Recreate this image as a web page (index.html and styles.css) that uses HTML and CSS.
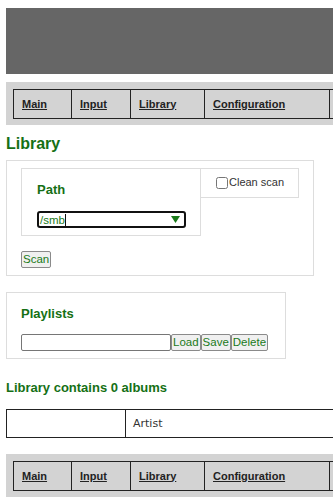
FILE: index.html
```html
<!DOCTYPE html>
<html lang="en">
<head>
    <meta charset="UTF-8">
    <meta name="viewport" content="width=device-width, initial-scale=1.0">
    <title>Library</title>
    <link rel="stylesheet" href="styles.css">
</head>
<body>

    <div class="page">
        <div class="banner"></div>

        <div class="menu">
            <table class="menu-table">
                <tr>
                    <td class="col-main"><a href="#">Main</a></td>
                    <td class="col-input"><a href="#">Input</a></td>
                    <td class="col-library"><a href="#">Library</a></td>
                    <td class="col-config"><a href="#">Configuration</a></td>
                    <td class="col-more"></td>
                </tr>
            </table>
        </div>

        <h2 class="title">Library</h2>

        <div class="panel scan-panel">
            <div class="scan-row">
                <div class="path-box">
                    <div class="label">Path</div>
                    <div class="combo">
                        <span class="combo-text">/smb</span><span class="caret"></span>
                        <svg class="combo-arrow" width="9" height="7" viewBox="0 0 9 7">
                            <polygon points="0,0 9,0 4.5,7" fill="#1a7a1a"/>
                        </svg>
                    </div>
                </div>
                <div class="clean-box">
                    <label class="check"><input type="checkbox" class="check-input">Clean scan</label>
                </div>
            </div>
            <button class="btn scan-btn">Scan</button>
        </div>

        <div class="panel playlist-panel">
            <div class="label">Playlists</div>
            <div class="playlist-row">
                <input type="text" class="playlist-input">
                <button class="btn">Load</button>
                <button class="btn">Save</button>
                <button class="btn">Delete</button>
            </div>
        </div>

        <h3 class="summary">Library contains 0 albums</h3>

        <table class="album-table">
            <tr>
                <td class="album-cover"></td>
                <td class="album-artist">Artist</td>
            </tr>
        </table>

        <div class="menu menu-bottom">
            <table class="menu-table">
                <tr>
                    <td class="col-main"><a href="#">Main</a></td>
                    <td class="col-input"><a href="#">Input</a></td>
                    <td class="col-library"><a href="#">Library</a></td>
                    <td class="col-config"><a href="#">Configuration</a></td>
                    <td class="col-more"></td>
                </tr>
            </table>
        </div>
    </div>

</body>
</html>
```

FILE: styles.css
```css
/* Basic Reset */
* {
    margin: 0;
    padding: 0;
    box-sizing: border-box;
}

html {
    overflow: hidden;
}

body {
    font-family: 'Liberation Sans', Arial, sans-serif;
    background-color: #fff;
    color: #333;
    margin: 8px 0 0 6px;
}

.page {
    width: 420px;
}

.banner {
    height: 66px;
    background-color: #666;
}

/* Navigation bar */
.menu {
    margin-top: 8px;
    padding: 7px 0 6px 7px;
    background-color: #d3d3d3;
}

.menu-bottom {
    margin-top: 16px;
}

.menu-table {
    border-collapse: collapse;
    table-layout: fixed;
    width: 436px;
}

.menu-table td {
    border: 1px solid #222;
    padding: 7px 8px;
    height: 29px;
    font-size: 11px;
    font-weight: bold;
    line-height: 13px;
    text-align: left;
    vertical-align: middle;
}

.menu-table a {
    color: #222;
}

.col-main { width: 58px; }
.col-input { width: 59px; }
.col-library { width: 74px; }
.col-config { width: 125px; }
.col-more { width: 120px; }

/* Headings */
.title {
    margin: 9px 0 7px;
    font-size: 16px;
    line-height: 19px;
    color: #157015;
}

.label {
    font-size: 13px;
    font-weight: bold;
    line-height: 16px;
    color: #157015;
}

.summary {
    margin: 21px 0 13px;
    font-size: 13px;
    line-height: 16px;
    color: #157015;
}

/* Panels */
.panel {
    border: 1px solid #ddd;
}

.scan-panel {
    width: 308px;
    padding: 7px 14px 7px 14px;
}

.scan-row {
    display: flex;
    align-items: flex-start;
}

.path-box {
    width: 180px;
    height: 68px;
    border: 1px solid #ddd;
    padding: 13px 14px 7px 15px;
}

.combo {
    display: flex;
    align-items: center;
    width: 149px;
    height: 17px;
    margin-top: 13px;
    border: 2px solid #111;
    border-radius: 3px;
    padding: 0 4px 0 1px;
    font-size: 11.5px;
    color: #1a7a1a;
}

.caret {
    width: 1px;
    height: 12px;
    background-color: #111;
}

.combo-arrow {
    margin-left: auto;
}

.clean-box {
    width: 98px;
    height: 30px;
    border: 1px solid #ddd;
    border-left: none;
    padding: 7px 0 0 15px;
}

.check {
    display: flex;
    align-items: center;
    font-size: 11px;
    line-height: 13px;
    color: #333;
}

.check-input {
    width: 12px;
    height: 12px;
    margin: 0 1px 0 0;
}

.btn {
    height: 17px;
    padding: 0 1px;
    font-family: 'Liberation Sans', Arial, sans-serif;
    font-size: 11.5px;
    line-height: 15px;
    color: #1a7a1a;
    background-color: #f0f0f0;
    border: 1px solid #8a8a8a;
    border-radius: 2px;
}

.scan-btn {
    display: block;
    margin-top: 15px;
}

.playlist-panel {
    width: 280px;
    margin-top: 16px;
    padding: 13px 14px 7px 14px;
}

.playlist-row {
    display: flex;
    margin-top: 12px;
}

.playlist-input {
    width: 150px;
    height: 17px;
    border: 1px solid #767676;
    border-radius: 2px;
    background-color: #fff;
}

/* Album table */
.album-table {
    border-collapse: collapse;
    table-layout: fixed;
    width: 420px;
}

.album-table td {
    border: 1px solid #222;
    height: 28px;
    font-family: 'DejaVu Sans', Verdana, sans-serif;
    font-size: 11px;
    color: #333;
    vertical-align: middle;
}

.album-cover {
    width: 119px;
}

.album-artist {
    padding-left: 7px;
}
```
